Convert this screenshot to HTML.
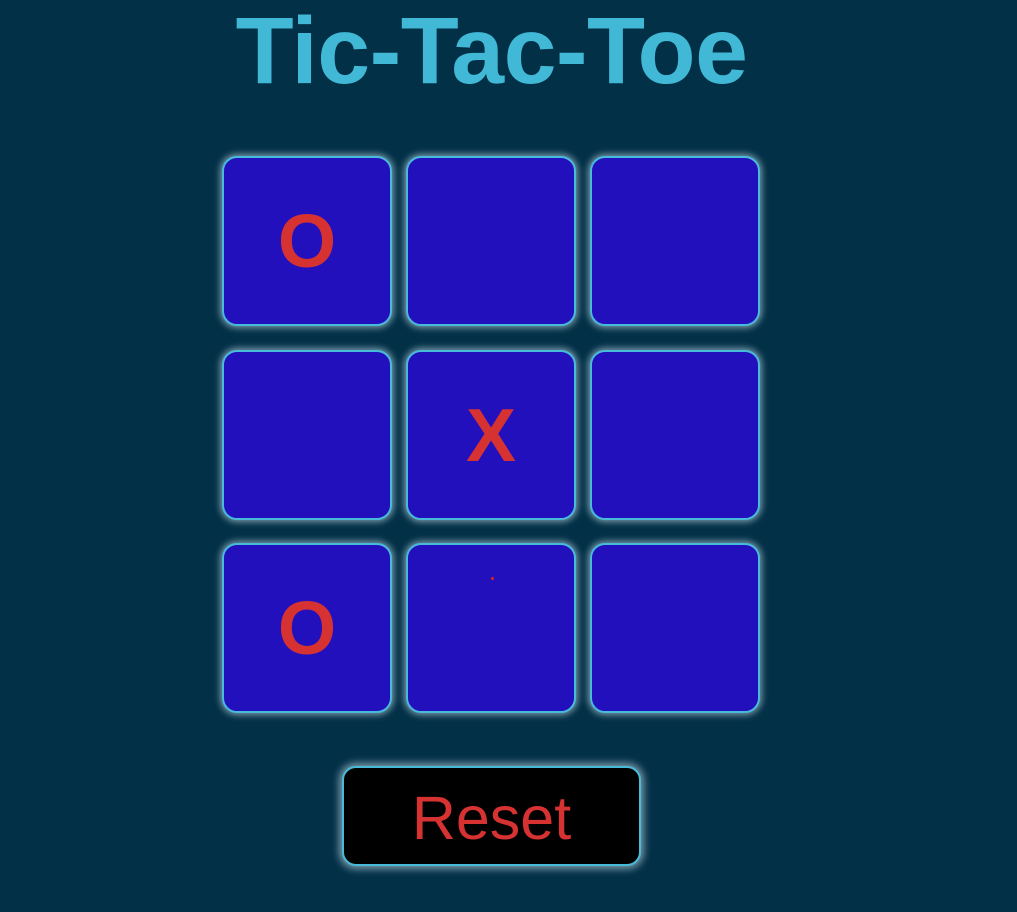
<!DOCTYPE html>
<html><head><style>
body{margin:0;width:1017px;height:912px;background:#023047;font-family:"Liberation Sans",Arial,sans-serif;position:relative;overflow:hidden}
h1{position:absolute;left:0;width:983px;top:4px;margin:0;text-align:center;font-size:95px;line-height:1;font-weight:bold;color:#41b9d6;letter-spacing:-0.5px}
.c{position:absolute;width:166px;height:166px;background:#2310bd;border:2px solid #48bbdb;border-radius:15px;box-shadow:0 0 7px 2px rgba(220,240,250,.55);box-sizing:content-box;color:#d63232;font-weight:bold;font-size:75px;line-height:166px;text-align:center}
.b{position:absolute;left:342px;top:766px;width:295px;height:96px;background:#000;border:2px solid #48bbdb;border-radius:14px;box-shadow:0 0 8px 3px rgba(220,240,250,.55);color:#d63232;font-size:61px;line-height:100px;text-align:center}
.d{position:absolute;left:491px;top:577px;width:3px;height:3px;border-radius:50%;background:#e02020}
</style></head><body>
<h1>Tic-Tac-Toe</h1>
<div class="c" style="left:222px;top:156px">O</div>
<div class="c" style="left:406px;top:156px"></div>
<div class="c" style="left:590px;top:156px"></div>
<div class="c" style="left:222px;top:350px"></div>
<div class="c" style="left:406px;top:350px">X</div>
<div class="c" style="left:590px;top:350px"></div>
<div class="c" style="left:222px;top:543px">O</div>
<div class="c" style="left:406px;top:543px"></div>
<div class="c" style="left:590px;top:543px"></div>
<div class="d"></div>
<div class="b">Reset</div>
</body></html>
